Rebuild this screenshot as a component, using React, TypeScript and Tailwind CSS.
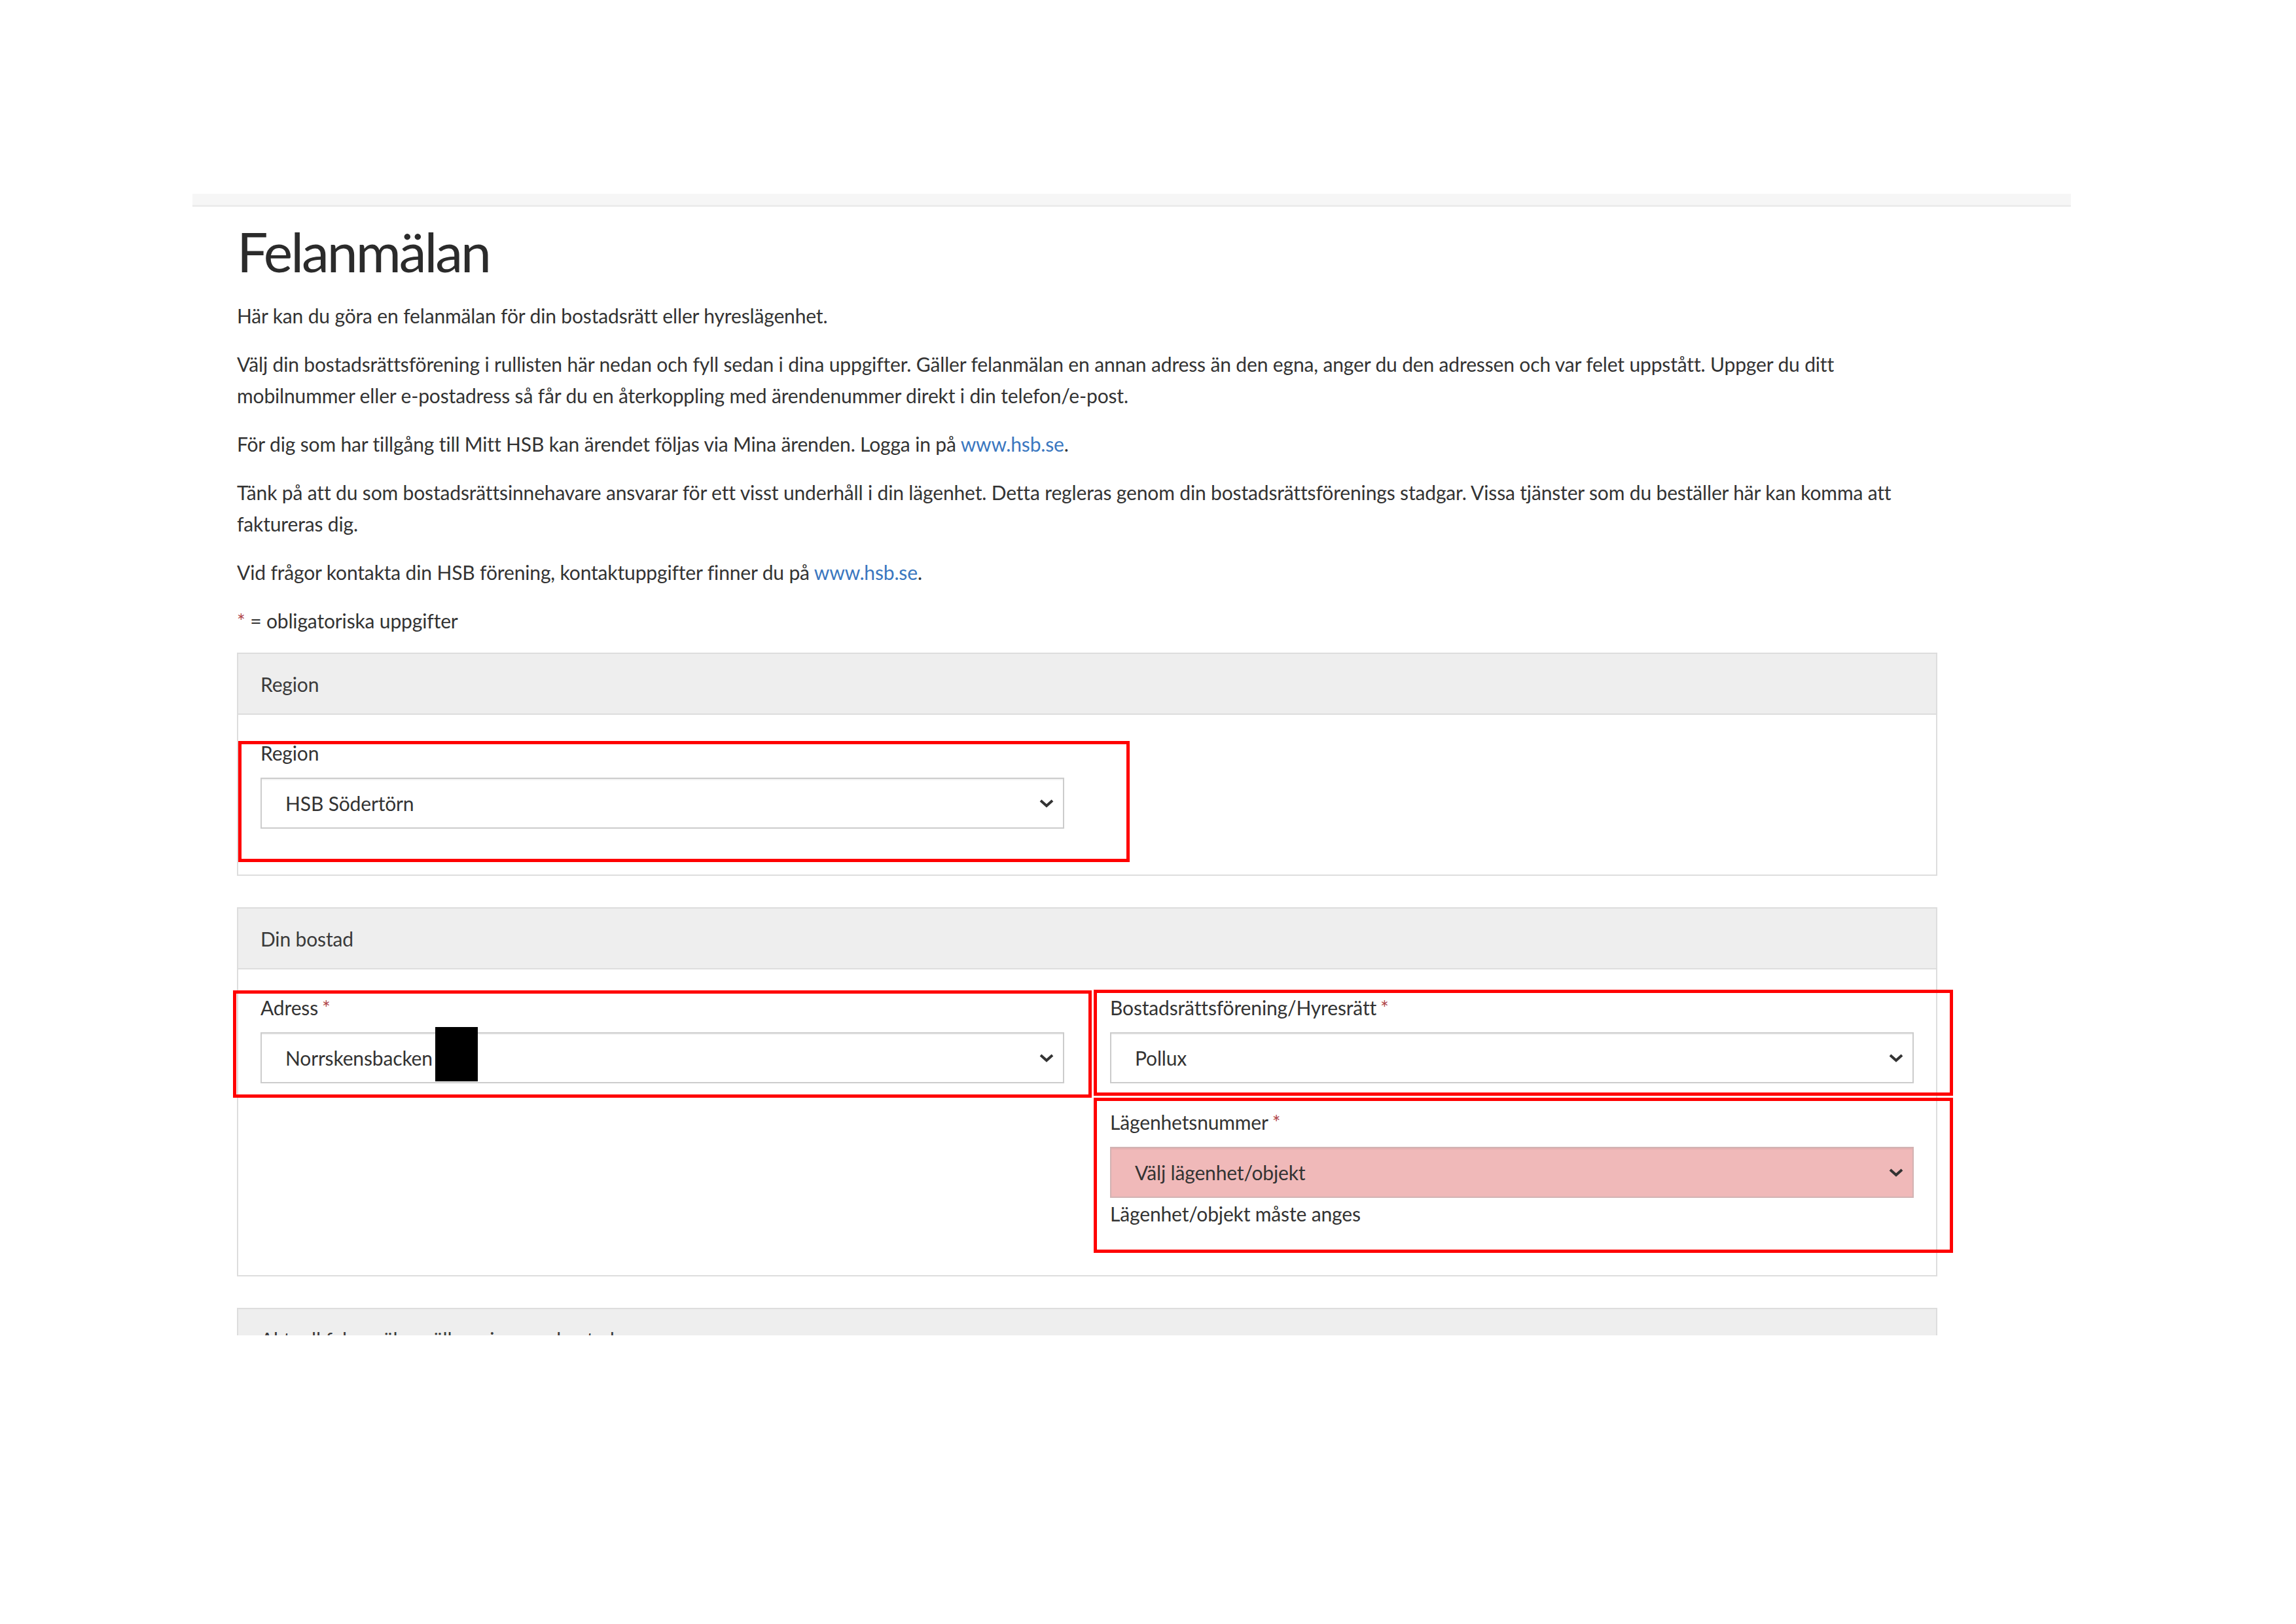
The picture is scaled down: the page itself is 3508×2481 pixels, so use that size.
import React from "react";

function Chevron() {
  return (
    <svg width="22" height="13" viewBox="0 0 22 13" className="shrink-0">
      <polyline points="2,2 11,10 20,2" fill="none" stroke="#333333" strokeWidth="4" strokeLinejoin="miter" />
    </svg>
  );
}

function Req() {
  return <span className="ml-[6px] text-[#b0464a]">*</span>;
}

function SelectBox({ value, error = false, children }: { value: string; error?: boolean; children?: React.ReactNode }) {
  return (
    <div
      className={`flex h-[78px] items-center justify-between border-2 pl-[36px] pr-[14px] shadow-[inset_0_2px_1px_rgba(0,0,0,0.05)] ${
        error ? "border-[#d2b3b3] bg-[#f0b9b9]" : "border-[#cccccc] bg-white"
      }`}
    >
      <div className="flex h-full items-center">
        <span>{value}</span>
        {children}
      </div>
      <Chevron />
    </div>
  );
}

function Panel({ title, children }: { title: string; children: React.ReactNode }) {
  return (
    <section className="mb-[48px] w-[2598px] border-2 border-[#dddddd]">
      <div className="flex h-[93px] items-center border-b-2 border-[#dddddd] bg-[#eeeeee] px-[34px] text-[#3a3a3a]">
        {title}
      </div>
      <div className="grid grid-cols-2 gap-x-[70px] px-[34px] pt-[34px] pb-[35px]">{children}</div>
    </section>
  );
}

export default function App() {
  return (
    <div className="h-[2481px] w-[3508px] bg-white font-['Lato','Liberation_Sans',sans-serif] text-[30px] leading-[48px] tracking-[-0.15px] text-[#333333]">
      <div className="h-[2040px] overflow-hidden pt-[296px]">
        <div className="ml-[294px] w-[2870px]">
          {/* strip left of the site header */}
          <div className="h-[20px] border-b-[3px] border-[#ececec] bg-[#f6f6f6]" />

          <main className="pl-[68px]">
            <h1 className="mt-[24px] text-[84px] leading-[88px] font-normal tracking-[-3px] text-[#2b2b2b]">Felanmälan</h1>

            <div className="mt-[30px] w-[2598px]">
              <p className="mb-[26px]">Här kan du göra en felanmälan för din bostadsrätt eller hyreslägenhet.</p>
              <p className="mb-[26px]">
                Välj din bostadsrättsförening i rullisten här nedan och fyll sedan i dina uppgifter. Gäller felanmälan en annan adress än den egna, anger du den adressen och var felet uppstått. Uppger du ditt
                <br />
                mobilnummer eller e-postadress så får du en återkoppling med ärendenummer direkt i din telefon/e-post.
              </p>
              <p className="mb-[26px]">
                För dig som har tillgång till Mitt HSB kan ärendet följas via Mina ärenden. Logga in på{" "}
                <a className="text-[#3a77c0]">www.hsb.se</a>.
              </p>
              <p className="mb-[26px]">
                Tänk på att du som bostadsrättsinnehavare ansvarar för ett visst underhåll i din lägenhet. Detta regleras genom din bostadsrättsförenings stadgar. Vissa tjänster som du beställer här kan komma att
                <br />
                faktureras dig.
              </p>
              <p className="mb-[26px]">
                Vid frågor kontakta din HSB förening, kontaktuppgifter finner du på <a className="text-[#3a77c0]">www.hsb.se</a>.
              </p>
              <p className="mb-[25px]">
                <span className="text-[#b0464a]">*</span> = obligatoriska uppgifter
              </p>
            </div>

            <Panel title="Region">
              <div className="relative mb-[35px]">
                <label className="block">Region</label>
                <div className="mt-[14px]">
                  <SelectBox value="HSB Södertörn" />
                </div>
                <div className="pointer-events-none absolute top-[6px] right-[-100px] bottom-[-51px] left-[-34px] border-[5px] border-[#ff0000]" />
              </div>
            </Panel>

            <Panel title="Din bostad">
              <div>
                <div className="relative mb-[35px]">
                  <label className="block">
                    Adress
                    <Req />
                  </label>
                  <div className="mt-[14px]">
                    <SelectBox value="Norrskensbacken">
                      <span className="relative ml-[4px] h-full w-[65px]">
                        <span className="absolute top-[-10px] left-0 h-[83px] w-[65px] bg-black" />
                      </span>
                    </SelectBox>
                  </div>
                  <div className="pointer-events-none absolute top-[-2px] right-[-42px] bottom-[-22px] left-[-42px] border-[5px] border-[#ff0000]" />
                </div>
              </div>

              <div>
                <div className="relative mb-[35px]">
                  <label className="block">
                    Bostadsrättsförening/Hyresrätt
                    <Req />
                  </label>
                  <div className="mt-[14px]">
                    <SelectBox value="Pollux" />
                  </div>
                  <div className="pointer-events-none absolute top-[-3px] right-[-60px] bottom-[-19px] left-[-25px] border-[5px] border-[#ff0000]" />
                </div>

                <div className="relative mb-[35px]">
                  <label className="block">
                    Lägenhetsnummer
                    <Req />
                  </label>
                  <div className="mt-[14px]">
                    <SelectBox value="Välj lägenhet/objekt" error />
                  </div>
                  <p>Lägenhet/objekt måste anges</p>
                  <div className="pointer-events-none absolute top-[-13px] right-[-60px] bottom-[-36px] left-[-25px] border-[5px] border-[#ff0000]" />
                </div>
              </div>
            </Panel>

            <Panel title="Aktuell felanmälan gäller min egen bostad">
              <div className="h-[200px]" />
            </Panel>
          </main>
        </div>
      </div>
    </div>
  );
}
